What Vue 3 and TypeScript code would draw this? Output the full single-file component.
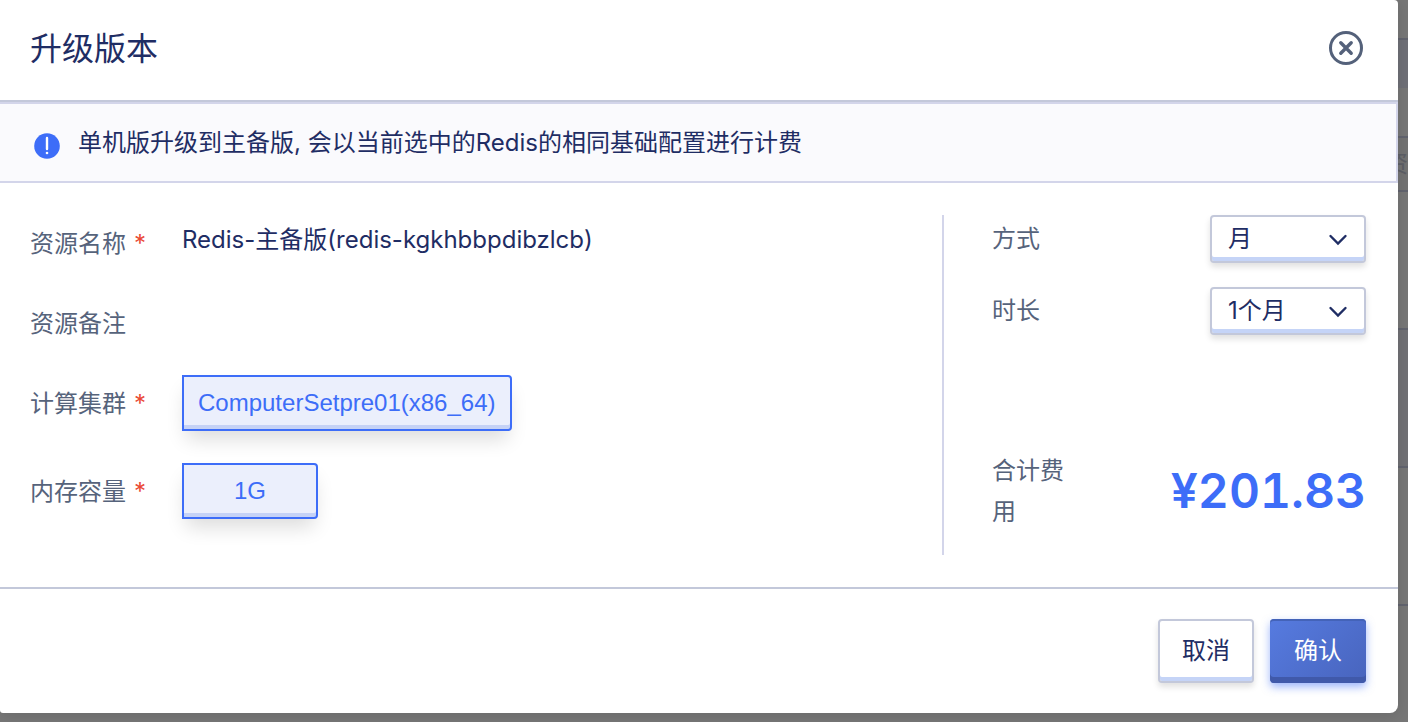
<script setup lang="ts">
import { computed, ref } from 'vue'

interface Field {
  label: string
  required: boolean
  text?: string
  option?: string
}

const fields: Field[] = [
  { label: '资源名称', required: true, text: 'Redis-主备版(redis-kgkhbbpdibzlcb)' },
  { label: '资源备注', required: false, text: '' },
  { label: '计算集群', required: true, option: 'ComputerSetpre01(x86_64)' },
  { label: '内存容量', required: true, option: '1G' },
]

const billing = ref('月')
const duration = ref('1个月')
const total = ref(201.83)
const price = computed(() => `¥${total.value.toFixed(2)}`)
</script>

<template>
  <div class="page">
    <section class="dialog" role="dialog" aria-labelledby="dialog-title">
      <header class="head">
        <h1 id="dialog-title">升级版本</h1>
        <button class="close" type="button" aria-label="关闭">
          <svg viewBox="0 0 36 36" width="36" height="36" fill="none" stroke="currentColor">
            <circle cx="18" cy="18" r="15.5" stroke-width="3" />
            <path d="M12.8 12.8 23.2 23.2M23.2 12.8 12.8 23.2" stroke-width="3.4" stroke-linecap="round" />
          </svg>
        </button>
      </header>

      <div class="notice">
        <svg class="info" viewBox="0 0 26 26" width="26" height="26">
          <circle cx="13" cy="13" r="12.8" fill="#3d6df8" />
          <path d="M13 5v11" stroke="#fff" stroke-width="2.4" stroke-linecap="round" />
          <circle cx="13" cy="20" r="1.3" fill="#fff" />
        </svg>
        <p>单机版升级到主备版, 会以当前选中的Redis的相同基础配置进行计费</p>
      </div>

      <div class="body">
        <dl class="fields">
          <div v-for="field in fields" :key="field.label" class="field">
            <dt>{{ field.label }}<span v-if="field.required" class="star">*</span></dt>
            <dd>
              <button v-if="field.option" class="chip" type="button">{{ field.option }}</button>
              <span v-else>{{ field.text }}</span>
            </dd>
          </div>
        </dl>

        <div class="billing">
          <div class="line">
            <label for="billing">方式</label>
            <div class="picker">
              <select id="billing" v-model="billing">
                <option>月</option>
                <option>年</option>
              </select>
              <svg class="chevron" viewBox="0 0 20 12" width="20" height="12" fill="none">
                <path d="m2.5 2 7.5 7.5L17.5 2" stroke="currentColor" stroke-width="2.4" stroke-linecap="round" />
              </svg>
            </div>
          </div>
          <div class="line">
            <label for="duration">时长</label>
            <div class="picker">
              <select id="duration" v-model="duration">
                <option>1个月</option>
                <option>2个月</option>
                <option>3个月</option>
              </select>
              <svg class="chevron" viewBox="0 0 20 12" width="20" height="12" fill="none">
                <path d="m2.5 2 7.5 7.5L17.5 2" stroke="currentColor" stroke-width="2.4" stroke-linecap="round" />
              </svg>
            </div>
          </div>
          <div class="total">
            <span class="total-label">合计费用</span>
            <strong>{{ price }}</strong>
          </div>
        </div>
      </div>

      <footer class="foot">
        <button class="btn" type="button">取消</button>
        <button class="btn primary" type="button">确认</button>
      </footer>
    </section>

    <div class="behind" aria-hidden="true">
      <div class="strip top"></div>
      <div class="strip tinted"></div>
      <div class="strip plain"></div>
      <div class="strip heading"><span>资</span></div>
      <div class="strip row"></div>
      <div class="strip row alt"></div>
      <div class="strip row"></div>
      <div class="strip rest"></div>
    </div>
  </div>
</template>

<style>
body {
  background: #777;
}
</style>

<style scoped>
* {
  box-sizing: border-box;
}
.page {
  display: grid;
  grid-template-columns: minmax(0, 1fr) 10px;
  align-items: start;
  min-height: 100vh;
  background: #777;
  color: #1f2d64;
  font-family: Inter, 'Noto Sans CJK SC', sans-serif;
  font-size: 24px;
  font-weight: 400;
}
h1,
p,
dl,
dd {
  margin: 0;
}
button,
select {
  font: inherit;
  color: inherit;
  cursor: pointer;
}
.dialog {
  position: relative;
  background: #fff;
  border-radius: 0 4px 8px 3px;
  box-shadow: 0 2px 16px rgba(0, 0, 0, 0.12);
}
.head {
  display: flex;
  align-items: flex-start;
  justify-content: space-between;
  padding: 24px 34px 26px 30px;
  border-bottom: 2px solid #c3c8da;
}
h1 {
  font-size: 32px;
  font-weight: 400;
  line-height: 50px;
}
.close {
  display: flex;
  align-items: center;
  height: 48px;
  padding: 0;
  border: 0;
  background: none;
  color: #54617a;
}
.notice {
  display: flex;
  align-items: center;
  gap: 18px;
  padding: 20px 34px;
  border: 2px solid #d3d5ea;
  border-left: 0;
  background: #fafafd;
  line-height: 37px;
}
.info {
  flex: none;
  margin-top: 6px;
}
.body {
  display: flex;
  padding: 32px 32px 32px 30px;
}
.fields {
  display: flex;
  flex: 1;
  flex-direction: column;
  gap: 32px;
}
.field {
  display: flex;
  align-items: flex-start;
}
dt {
  width: 152px;
  height: 48px;
  padding-top: 10px;
  color: #56637b;
  line-height: 38px;
}
.star {
  margin-left: 8px;
  color: #ea4a36;
}
dd {
  height: 48px;
  line-height: 50px;
}
.field:has(.chip) dd {
  height: 56px;
}
.chip {
  display: block;
  min-width: 136px;
  height: 56px;
  padding: 0 14px;
  border: 2px solid #3d6df8;
  border-radius: 0 4px 4px 0;
  background: #ebeffc;
  box-shadow: inset 0 -4px 0 #c5d2f6, 0 12px 20px -4px rgba(0, 0, 0, 0.14);
  color: #3d6df8;
  font-family: 'Liberation Sans', Arial, sans-serif;
}
.billing {
  display: flex;
  flex-direction: column;
  gap: 24px;
  width: 424px;
  min-height: 340px;
  padding-left: 48px;
  border-left: 2px solid #d3d5ea;
}
.line,
.total {
  display: flex;
  align-items: center;
  justify-content: space-between;
  color: #56637b;
}
label {
  padding-bottom: 6px;
}
.picker {
  position: relative;
  width: 156px;
  color: #1f2d64;
}
select {
  display: block;
  width: 100%;
  height: 48px;
  padding: 0 40px 2px 16px;
  border: 2px solid #c3c8da;
  border-radius: 4px;
  background: #fff;
  box-shadow: inset 0 -4px 0 #c5d4f7, 0 4px 6px rgba(0, 0, 0, 0.12);
  appearance: none;
}
.chevron {
  position: absolute;
  top: 19px;
  right: 18px;
  pointer-events: none;
}
.total {
  margin-top: auto;
  padding-bottom: 23px;
}
.total-label {
  width: 80px;
  line-height: 41px;
}
strong {
  color: #3d6df8;
  font-size: 48px;
  font-weight: 600;
  font-variant-numeric: tabular-nums;
  line-height: 56px;
}
.foot {
  display: flex;
  justify-content: flex-end;
  gap: 16px;
  padding: 30px 32px;
  border-top: 2px solid #c3c8da;
}
.btn {
  width: 96px;
  height: 64px;
  padding: 0 0 5px;
  border: 2px solid #c3c8da;
  border-radius: 4px;
  background: #fff;
  box-shadow: inset 0 -4px 0 #c5d4f7, 0 4px 6px rgba(0, 0, 0, 0.12);
}
.primary {
  border: 0;
  background: linear-gradient(135deg, #567be0, #4864bd);
  box-shadow: inset 0 2px 0 #4463b8, inset 0 -6px 0 #4059aa, 0 4px 8px rgba(61, 109, 248, 0.5);
  color: #fff;
}
.behind {
  overflow: hidden;
}
.strip {
  border-bottom: 2px solid #62646f;
}
.top {
  height: 40px;
}
.tinted {
  height: 48px;
  border: 0;
  background: #6f7077;
}
.plain {
  height: 50px;
}
.heading {
  display: flex;
  justify-content: flex-end;
  height: 54px;
  background: #737373;
  color: #5d5f66;
  line-height: 52px;
}
.row {
  height: 138px;
}
.alt {
  background: #717175;
}
.rest {
  height: 116px;
  border: 0;
}
</style>
